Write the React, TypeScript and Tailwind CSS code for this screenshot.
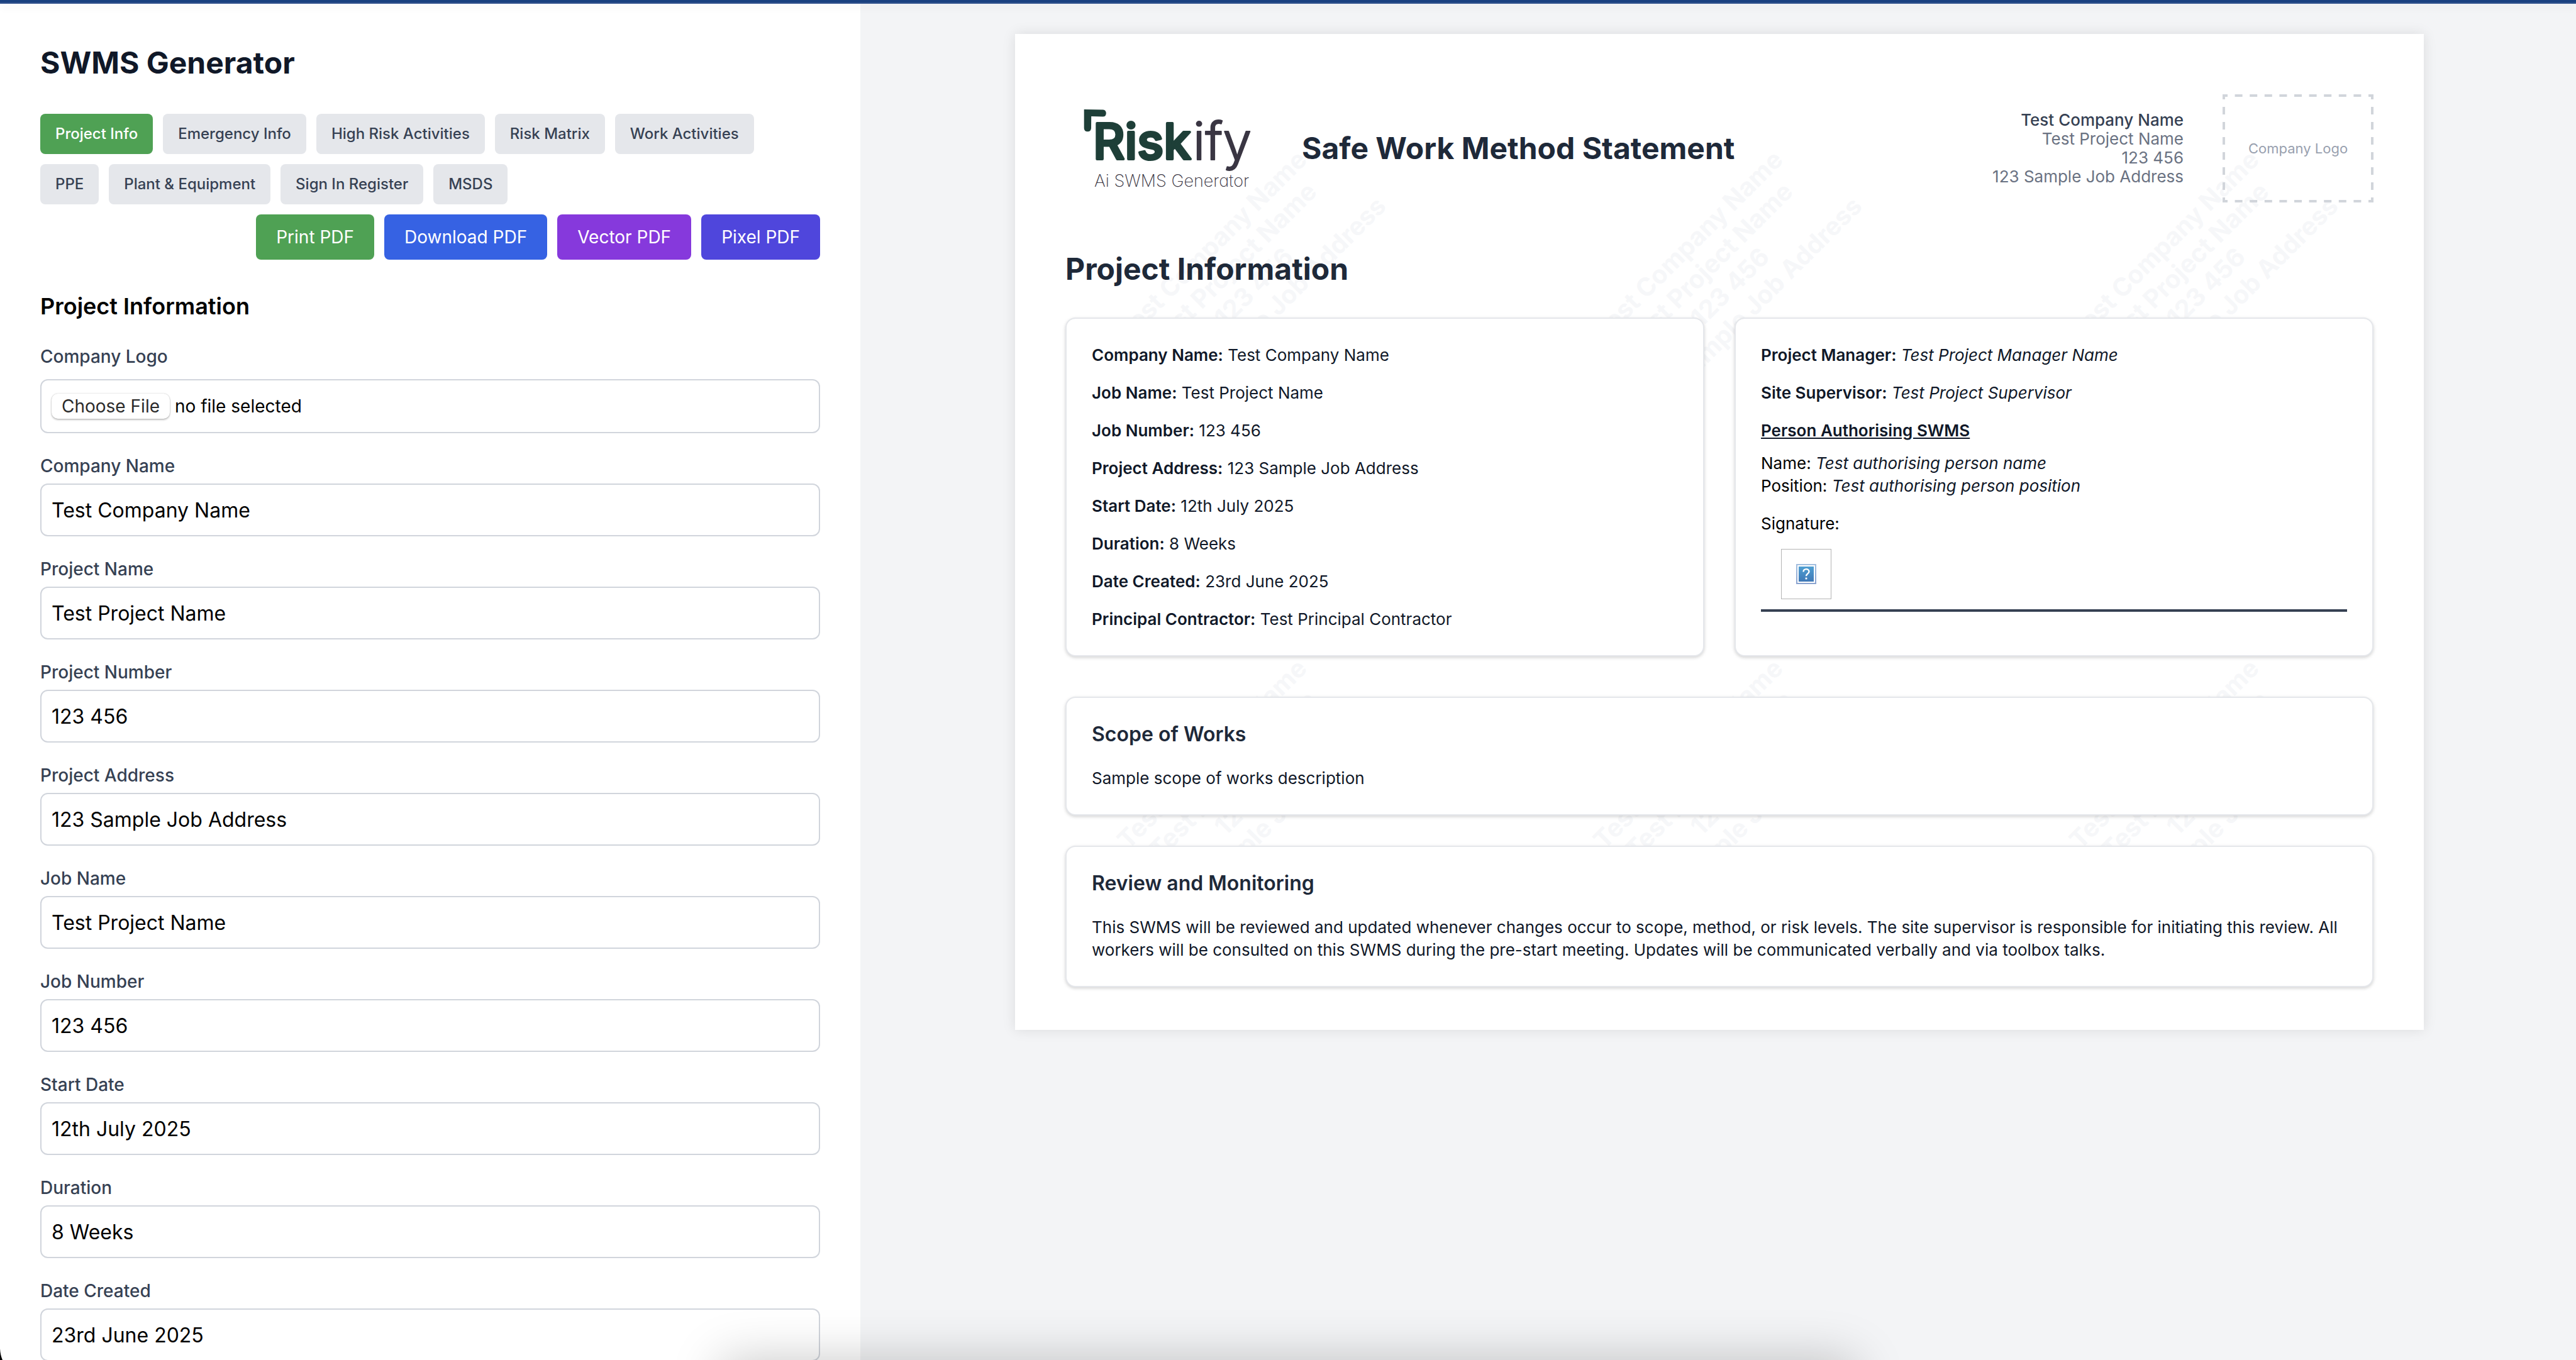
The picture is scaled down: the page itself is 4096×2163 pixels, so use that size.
import type { ReactNode } from "react";

const tabs = [
  "Project Info",
  "Emergency Info",
  "High Risk Activities",
  "Risk Matrix",
  "Work Activities",
  "PPE",
  "Plant & Equipment",
  "Sign In Register",
  "MSDS",
];

const actions = [
  { label: "Print PDF", color: "bg-[#4fa154]" },
  { label: "Download PDF", color: "bg-[#3662e3]" },
  { label: "Vector PDF", color: "bg-[#8639dc]" },
  { label: "Pixel PDF", color: "bg-[#4f46dc]" },
];

const fields = [
  { label: "Company Name", value: "Test Company Name" },
  { label: "Project Name", value: "Test Project Name" },
  { label: "Project Number", value: "123 456" },
  { label: "Project Address", value: "123 Sample Job Address" },
  { label: "Job Name", value: "Test Project Name" },
  { label: "Job Number", value: "123 456" },
  { label: "Start Date", value: "12th July 2025" },
  { label: "Duration", value: "8 Weeks" },
  { label: "Date Created", value: "23rd June 2025" },
];

const details = [
  ["Company Name:", "Test Company Name"],
  ["Job Name:", "Test Project Name"],
  ["Job Number:", "123 456"],
  ["Project Address:", "123 Sample Job Address"],
  ["Start Date:", "12th July 2025"],
  ["Duration:", "8 Weeks"],
  ["Date Created:", "23rd June 2025"],
  ["Principal Contractor:", "Test Principal Contractor"],
];

const watermarkLines = [
  "Test Company Name",
  "Test Project Name",
  "123 456",
  "123 Sample Job Address",
];

function Watermark() {
  return (
    <svg
      aria-hidden="true"
      className="absolute inset-0 h-full w-full fill-[#f6f7f9] text-[40px] font-bold"
    >
      {[346, 1155].map((y) =>
        [323, 1080, 1837].map((x) => (
          <g key={`${x}-${y}`} transform={`translate(${x} ${y}) rotate(-45)`}>
            {watermarkLines.map((line, i) => (
              <text key={line} y={i * 47} textAnchor="middle">
                {line}
              </text>
            ))}
          </g>
        )),
      )}
    </svg>
  );
}

function RiskifyLogo() {
  return (
    <svg
      role="img"
      aria-label="Riskify Ai SWMS Generator"
      viewBox="0 0 344 172"
      className="h-[172px] w-[344px] shrink-0"
    >
      <path
        d="M29.7 24 L60 24.4 Q64.8 25 64.8 30 Q64.8 35.6 59.5 35.6 L41.2 35 L41 54 Q40.6 59.3 35.4 59.3 Q30 59.3 29.7 54 Z"
        fill="#1e3f38"
      />
      <text
        x="44"
        y="103"
        fill="#1e3f38"
        stroke="#1e3f38"
        strokeWidth="4"
        strokeLinejoin="round"
        className="text-[78px] font-medium"
      >
        Risk
      </text>
      <text
        x="203"
        y="104"
        fill="#3a3643"
        stroke="#3a3643"
        strokeWidth="2"
        strokeLinejoin="round"
        className="text-[82px] font-light"
      >
        ify
      </text>
      <text
        x="46"
        y="147"
        fill="#3a3643"
        className="text-[27px] font-extralight [font-feature-settings:'cv11']"
      >
        Ai SWMS Generator
      </text>
    </svg>
  );
}

function LogoPlaceholder() {
  return (
    <div className="relative flex h-[172px] w-[240px] shrink-0 items-center justify-center">
      <svg
        aria-hidden="true"
        viewBox="0 0 240 172"
        className="absolute inset-0 h-full w-full"
        fill="none"
        stroke="#d1d5db"
        strokeWidth="4"
      >
        <path d="M0 2H240M0 170H240" strokeDasharray="12 11.6" strokeDashoffset="4" />
        <path d="M2 0V172M238 0V172" strokeDasharray="12 12" strokeDashoffset="4" />
      </svg>
      <span className="text-[22px] leading-8 text-gray-400">Company Logo</span>
    </div>
  );
}

function Card({ children, className = "" }: { children: ReactNode; className?: string }) {
  return (
    <section
      className={`relative rounded-2xl border-2 border-gray-200 bg-white p-10 pb-[39px] shadow-[0_2px_6px_rgba(0,0,0,0.1),0_2px_4px_rgba(0,0,0,0.08)] ${className}`}
    >
      {children}
    </section>
  );
}

function MissingImage() {
  return (
    <svg viewBox="0 0 32 32" role="img" aria-label="Missing signature image" className="h-8 w-8">
      <defs>
        <linearGradient id="frame" x1="0" y1="0" x2="0" y2="1">
          <stop offset="0" stopColor="#a3bfdf" />
          <stop offset="1" stopColor="#8aa3cf" />
        </linearGradient>
        <linearGradient id="fill" x1="0" y1="0" x2="0" y2="1">
          <stop offset="0" stopColor="#4f9fd2" />
          <stop offset="1" stopColor="#3f78b6" />
        </linearGradient>
      </defs>
      <rect width="32" height="32" fill="url(#frame)" />
      <rect x="2" y="2" width="28" height="28" fill="#fff" />
      <rect x="4" y="4" width="24" height="24" fill="url(#fill)" />
      <path
        d="M11.5 12.5 C11.5 6.8 20.5 6.8 20.5 12 C20.5 15.4 16 15.4 16 19.2"
        fill="none"
        stroke="#fff"
        strokeWidth="2.4"
      />
      <rect x="14.6" y="21.6" width="2.8" height="2.8" fill="#fff" />
    </svg>
  );
}

function Sidebar() {
  return (
    <aside className="w-[33.4%] shrink-0 bg-white px-16 pt-[62px]">
      <h1 className="text-[48px] leading-[64px] font-bold text-gray-900">SWMS Generator</h1>
      <nav className="mt-[49px] flex flex-wrap gap-4">
        {tabs.map((tab, i) => (
          <button
            key={tab}
            type="button"
            className={`rounded-lg px-6 py-4 text-[24px] leading-8 font-medium ${
              i === 0 ? "bg-[#4fa154] text-white" : "bg-gray-200 text-gray-700"
            }`}
          >
            {tab}
          </button>
        ))}
      </nav>
      <div className="mt-4 flex justify-end gap-4">
        {actions.map((action) => (
          <button
            key={action.label}
            type="button"
            className={`rounded-lg px-8 py-4 text-[28px] leading-10 text-white ${action.color}`}
          >
            {action.label}
          </button>
        ))}
      </div>
      <form>
        <h2 className="mt-[46px] text-[36px] leading-[56px] font-semibold text-black">
          Project Information
        </h2>
        <label htmlFor="logo" className="mt-8 block text-[28px] leading-10 font-medium text-gray-700">
          Company Logo
        </label>
        <div className="mt-4 flex h-[86px] items-center rounded-xl border-2 border-gray-300 px-4">
          <input id="logo" type="file" className="sr-only" />
          <label
            htmlFor="logo"
            className="rounded-[10px] bg-white px-4 text-[28px] leading-10 text-[#2b2b2b] shadow-[0_0_2px_rgba(0,0,0,0.25),0_2px_3px_rgba(0,0,0,0.22)]"
          >
            Choose File
          </label>
          <span className="ml-2 text-[28px] leading-10 text-black">no file selected</span>
        </div>
        {fields.map((field) => (
          <div key={field.label} className="mt-8">
            <label
              htmlFor={field.label}
              className="block text-[28px] leading-10 font-medium text-gray-700"
            >
              {field.label}
            </label>
            <input
              id={field.label}
              type="text"
              defaultValue={field.value}
              className="mt-2 block h-[84px] w-full rounded-xl border-2 border-gray-300 bg-white px-4 text-[32px] leading-[48px] text-black"
            />
          </div>
        ))}
      </form>
    </aside>
  );
}

function Document() {
  return (
    <article className="relative min-h-[1584px] w-[2240px] overflow-hidden bg-white px-20 pt-24 text-[26px] leading-9 text-gray-900">
      <Watermark />
      <header className="relative flex items-center">
        <RiskifyLogo />
        <h1 className="ml-8 text-[48px] leading-[64px] font-bold text-gray-800">
          Safe Work Method Statement
        </h1>
        <div className="mr-[62px] ml-auto text-right leading-[30px] text-gray-500">
          <p className="font-medium text-gray-700">Test Company Name</p>
          <p>Test Project Name</p>
          <p>123 456</p>
          <p>123 Sample Job Address</p>
        </div>
        <LogoPlaceholder />
      </header>
      <h2 className="relative mt-[74px] text-[48px] leading-[64px] font-bold text-gray-800">
        Project Information
      </h2>
      <div className="mt-[45px] grid grid-cols-2 gap-12">
        <Card className="flex flex-col gap-6">
          {details.map(([name, value]) => (
            <p key={name}>
              <strong className="font-semibold">{name}</strong> {value}
            </p>
          ))}
        </Card>
        <Card>
          <p>
            <strong className="font-semibold">Project Manager:</strong>{" "}
            <em>Test Project Manager Name</em>
          </p>
          <p className="mt-6">
            <strong className="font-semibold">Site Supervisor:</strong>{" "}
            <em>Test Project Supervisor</em>
          </p>
          <h3 className="mt-6 font-semibold underline">Person Authorising SWMS</h3>
          <p className="mt-4">
            <span className="text-black">Name:</span> <em>Test authorising person name</em>
          </p>
          <p>
            <span className="text-black">Position:</span> <em>Test authorising person position</em>
          </p>
          <p className="mt-6 text-black">Signature:</p>
          <div className="mt-[22px] border-b-4 border-gray-700 pb-4 pl-8">
            <div className="flex h-20 w-20 items-center justify-center border border-[#b4b4b4]">
              <MissingImage />
            </div>
          </div>
        </Card>
      </div>
      <Card className="mt-16">
        <h3 className="text-[32px] leading-9 font-semibold text-gray-800">Scope of Works</h3>
        <p className="mt-[34px]">Sample scope of works description</p>
      </Card>
      <Card className="mt-12">
        <h3 className="text-[32px] leading-9 font-semibold text-gray-800">Review and Monitoring</h3>
        <p className="mt-[34px]">
          This SWMS will be reviewed and updated whenever changes occur to scope, method, or risk
          levels. The site supervisor is responsible for initiating this review. All workers will be
          consulted on this SWMS during the pre-start meeting. Updates will be communicated verbally
          and via toolbox talks.
        </p>
      </Card>
    </article>
  );
}

export default function App() {
  return (
    <div className="relative flex h-screen flex-col overflow-hidden bg-gray-100 font-['Inter',sans-serif]">
      <div className="relative z-10 h-[6px] shrink-0 border-b-2 border-[#35558f] bg-[#1a4180] shadow-[0_8px_12px_-2px_rgba(0,0,0,0.1),0_4px_8px_-4px_rgba(0,0,0,0.1)]" />
      <div className="flex min-h-0 flex-1">
        <Sidebar />
        <main className="flex min-w-0 flex-1 items-start justify-center pt-12 pl-1">
          <div className="shadow-[0_0_20px_rgba(0,0,0,0.1)]">
            <Document />
          </div>
        </main>
      </div>
      {/* Soft shade cast by the dock along the bottom edge */}
      <div
        aria-hidden="true"
        className="pointer-events-none absolute inset-x-[28%] top-full h-40 shadow-[0_0_80px_rgba(0,0,0,0.22)]"
      />
      {/* Rounded window corner */}
      <svg
        aria-hidden="true"
        viewBox="0 0 4 18"
        className="pointer-events-none absolute bottom-0 left-0 h-[18px] w-1"
      >
        <path d="M0 0 Q0.5 10 4 18 H0 Z" fill="#000" />
      </svg>
    </div>
  );
}
